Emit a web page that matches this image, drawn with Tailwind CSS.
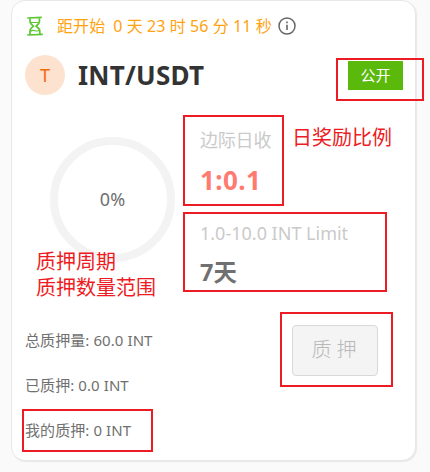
<!DOCTYPE html>
<html lang="zh-CN">
<head>
<meta charset="utf-8">
<title>INT/USDT</title>
<script src="https://cdn.jsdelivr.net/npm/@tailwindcss/browser@4"></script>
</head>
<body class="relative h-[472px] w-[430px] overflow-hidden bg-[#fafafa] pl-[11px] font-['Noto_Sans','Noto_Sans_CJK_SC',sans-serif] whitespace-nowrap text-[#707070]">
  <main class="flex h-[461px] w-[405px] flex-col rounded-[14px] border border-[#e8e8e8] bg-white px-[13px] shadow-[1px_1px_1px_#e8e8e8]">
    <header class="flex h-[50px] items-center text-base text-[#ffa30f]">
      <svg class="h-5 w-5 shrink-0" viewBox="0 0 20 20" fill="none" stroke="#5cc732" stroke-width="1.7" stroke-linejoin="round">
        <path d="M2.3 2 16.8 1.3M2.3 19 17.8 18.4M5 2.2v3.4c0 2.3 2 3.2 3.6 4.5C7 11.500 5 12.500 5 15v3.500M14.400 2v3.600c0 2.300-2 3.200-3.400 4.500 1.600 1.400 3.800 2.400 3.800 4.900v3.300"/>
        <path d="M6 6.500h7.500M5.500 15.500c1.500-1.500 3-1.300 4.500-.8s3 .4 4.300-.1" stroke-width="1.100"/>
      </svg>
      <span class="ml-3 tracking-[0.1px]">距开始</span>
      <span class="ml-2 tracking-[0.07px]">0 天 23 时 56 分 11 秒</span>
      <svg class="ml-[6px] h-[18px] w-[18px] shrink-0" viewBox="0 0 18 18" fill="none" stroke="#666">
        <circle cx="9" cy="9" r="8" stroke-width="1.5"/>
        <path d="M9 7.8V13M9 4.5v1.7" stroke-width="1.6"/>
      </svg>
    </header>
    <section class="mt-1 flex h-10 items-center">
      <span class="flex h-10 w-10 items-center justify-center rounded-full bg-[#fde3cf] text-lg leading-10 text-[#f56a00]"><span class="-mt-px">T</span></span>
      <h1 class="-mt-px ml-[13px] text-[26px] leading-10 font-bold tracking-[0.25px] text-[#333]">INT/USDT</h1>
      <span class="ml-auto mr-[-1px] flex h-[29px] w-[55px] items-center justify-center bg-[#5ab90b] text-[15px] text-white">公开</span>
    </section>
    <section class="mt-[26px] flex h-[180px]">
      <div class="ml-[25px] mt-4 flex h-[125px] w-[125px] items-center justify-center rounded-full border-8 border-[#f3f3f3] text-[18px]">0%</div>
      <dl class="ml-[25px]">
        <dt class="mt-[3px] h-8 text-[18px] leading-8 tracking-[-0.2px] text-[#cacaca]">边际日收</dt>
        <dd class="mt-1 h-10 text-[26px] leading-10 font-bold tracking-[0.4px] text-[#ff7a70]">1:0.1</dd>
        <dt class="mt-[17px] h-8 text-[18px] leading-8 text-[#cacaca]">1.0-10.0 INT Limit</dt>
        <dd class="mt-[3px] h-10 text-[23.500px] leading-10 font-bold">7天</dd>
      </dl>
    </section>
    <footer class="mt-[17px] flex justify-between text-[15px]">
      <ul>
        <li class="h-[45px] leading-[45px] tracking-[0.08px]">总质押量: 60.0 INT</li>
        <li class="h-[45px] leading-[45px] tracking-[0.08px]">已质押: 0.0 INT</li>
        <li class="h-[45px] leading-[45px] tracking-[0.08px]">我的质押: 0 INT</li>
      </ul>
      <button class="mt-[7px] mr-6 flex h-[51px] w-[86px] items-center justify-center rounded-[4px] border border-[#d9d9d9] bg-[#f4f4f4] pr-[2px] pb-px text-[20px] font-light text-[#b8b8b8]">质 押</button>
    </footer>
  </main>
  <div class="text-[20px] leading-[26px] text-[#ed1c24]">
    <div class="absolute left-[336px] top-[58px] h-[43px] w-[88px] border-2"></div>
    <div class="absolute left-[183px] top-[115px] h-[91px] w-[101px] border-2"></div>
    <div class="absolute left-[183px] top-[212px] h-[80px] w-[204px] border-2"></div>
    <div class="absolute left-[280px] top-[312px] h-[75px] w-[113px] border-2"></div>
    <div class="absolute left-[22px] top-[409px] h-[43px] w-[131px] border-2"></div>
    <p class="absolute left-[292px] top-[125px]">日奖励比例</p>
    <p class="absolute left-[36px] top-[249px]">质押周期<br>质押数量范围</p>
  </div>
</body>
</html>
